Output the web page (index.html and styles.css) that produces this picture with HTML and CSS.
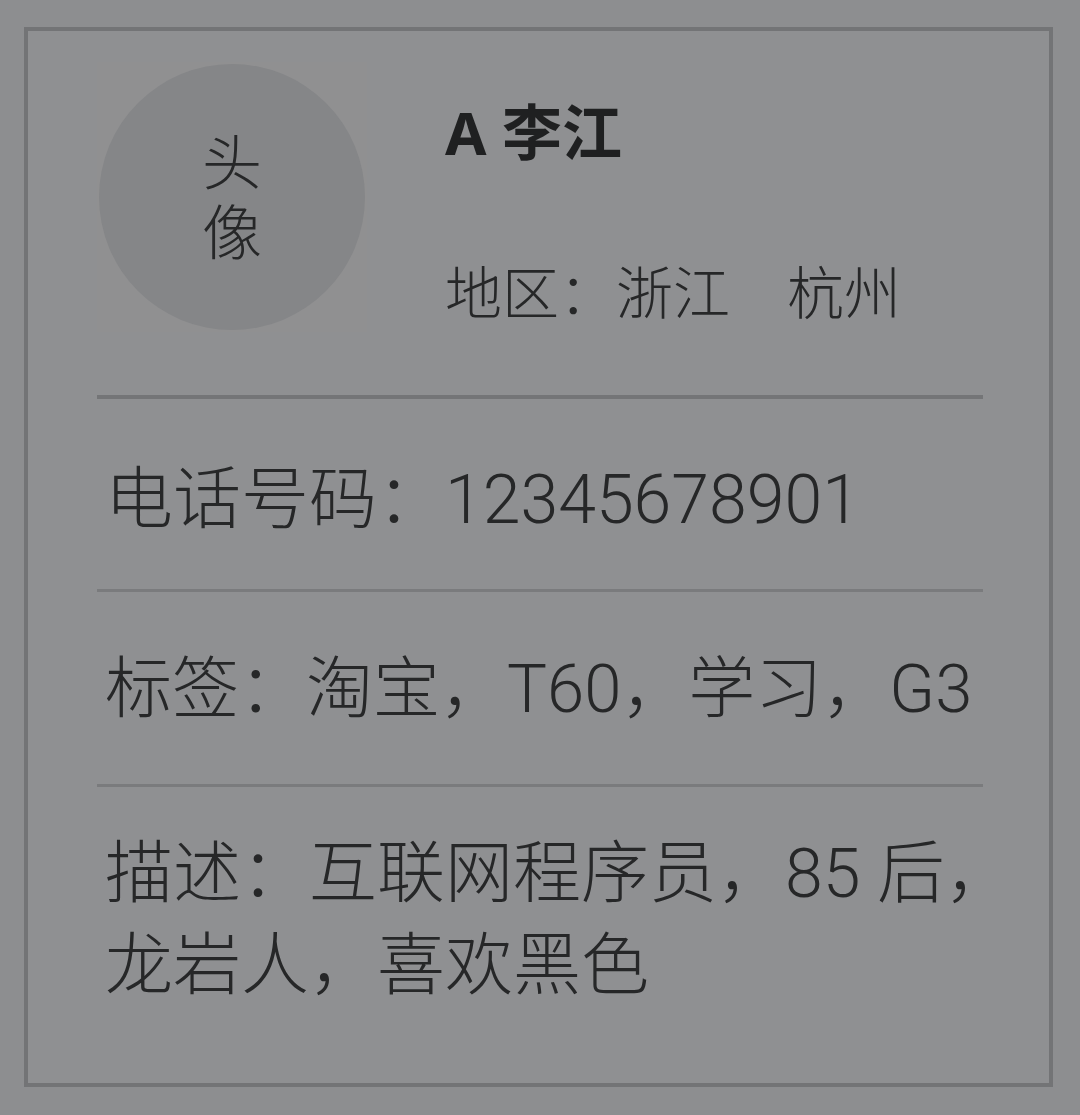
FILE: index.html
```html
<!DOCTYPE html>
<html lang="zh-CN">
<head>
  <meta charset="UTF-8">
  <meta name="viewport" content="width=device-width, initial-scale=1.0">
  <title>联系人名片</title>
  <link rel="stylesheet" href="styles.css">
</head>
<body>
  <!-- Contact card -->
  <div class="card">
    <!-- Header: avatar + name -->
    <div class="header">
      <div class="avatar-box">
        <div class="avatar">
          <span>头</span>
          <span>像</span>
        </div>
      </div>
      <div class="info">
        <div class="name">A 李江</div>
        <div class="region">地区：浙江　杭州</div>
      </div>
    </div>
    <div class="row row-phone">电话号码：12345678901</div>
    <div class="row row-tags">标签：淘宝，T60，学习，G3</div>
    <div class="row row-desc">描述：互联网程序员，85 后，<br>龙岩人，喜欢黑色</div>
  </div>
</body>
</html>
```

FILE: styles.css
```css
body {
  margin: 0;
  background: #8d8e90;
  font-family: "Noto Sans", "Noto Sans CJK SC", sans-serif;
  color: #262728;
}
.card {
  box-sizing: border-box;
  width: 1029px;
  height: 1060px;
  margin: 27px 0 0 24px;
  padding: 31px 66px 0 69px;
  border: 4px solid #737476;
  background: #8f9092;
}
.header {
  display: flex;
  gap: 78px;
  padding-bottom: 63px;
  border-bottom: 4px solid #747577;
}
.avatar-box {
  width: 270px;
  height: 270px;
  display: flex;
  align-items: center;
  justify-content: center;
  background: #909091;
}
.avatar {
  width: 266px;
  height: 266px;
  border-radius: 50%;
  background: #858688;
  display: flex;
  flex-direction: column;
  align-items: center;
  justify-content: center;
  font-size: 60px;
  line-height: 70px;
  font-weight: 300;
}
.info {
  padding-top: 35px;
}
.name {
  font-size: 60px;
  line-height: 70px;
  font-weight: 700;
  color: #1f2021;
}
.region {
  margin-top: 90px;
  font-size: 57px;
  line-height: 70px;
  font-weight: 300;
}
.row {
  padding: 0 0 0 8px;
  font-family: Roboto, "Noto Sans CJK SC", sans-serif;
  font-size: 68px;
  line-height: 92px;
  font-weight: 300;
  white-space: nowrap;
}
.row-phone {
  padding-top: 55px;
  padding-bottom: 43px;
  border-bottom: 3px solid #7a7b7d;
}
.row-tags {
  padding-top: 51px;
  padding-bottom: 49px;
  font-size: 67px;
  border-bottom: 3px solid #7a7b7d;
}
.row-desc {
  padding-top: 41px;
}
```
